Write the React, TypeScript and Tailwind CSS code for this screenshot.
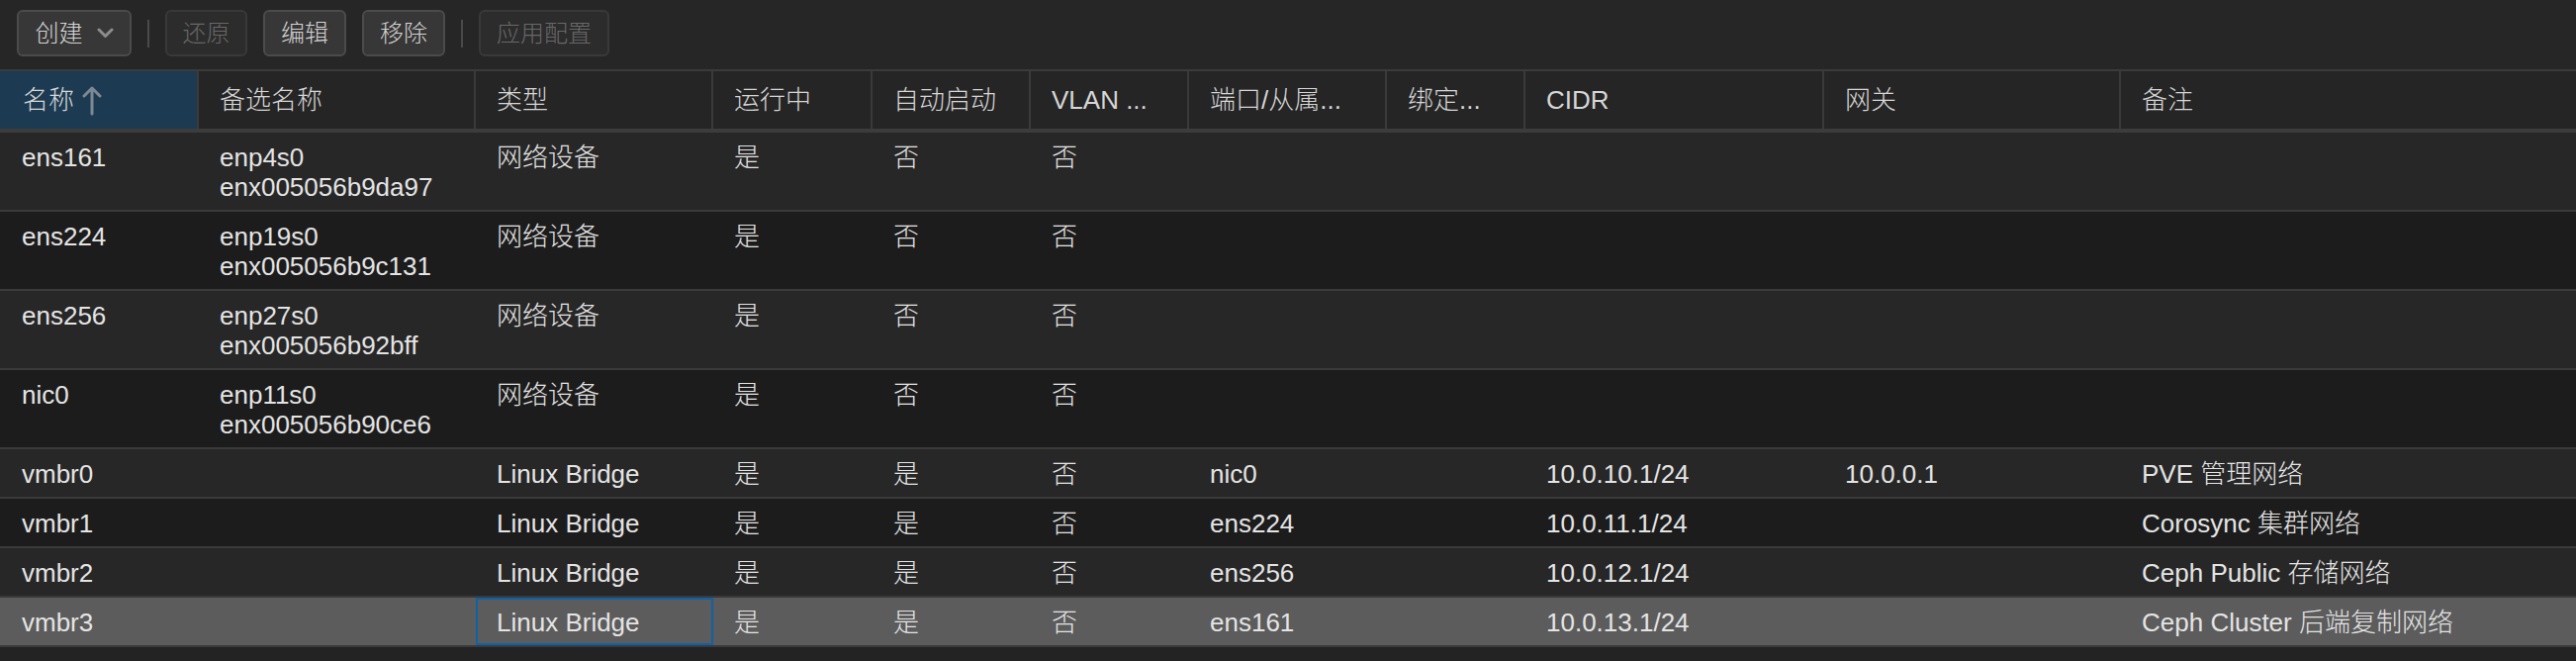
const font = { fontFamily: '"Liberation Sans", "Noto Sans CJK SC", sans-serif' };

type Col = { label: string; w: string };

const cols: Col[] = [
  { label: "名称", w: "w-[201px]" },
  { label: "备选名称", w: "w-[280px]" },
  { label: "类型", w: "w-[240px]" },
  { label: "运行中", w: "w-[161px]" },
  { label: "自动启动", w: "w-[160px]" },
  { label: "VLAN ...", w: "w-[160px]" },
  { label: "端口/从属...", w: "w-[200px]" },
  { label: "绑定...", w: "w-[140px]" },
  { label: "CIDR", w: "w-[302px]" },
  { label: "网关", w: "w-[300px]" },
  { label: "备注", w: "flex-1" },
];

type Row = { cells: (string | string[])[]; selected?: boolean };

const rows: Row[] = [
  { cells: ["ens161", ["enp4s0", "enx005056b9da97"], "网络设备", "是", "否", "否", "", "", "", "", ""] },
  { cells: ["ens224", ["enp19s0", "enx005056b9c131"], "网络设备", "是", "否", "否", "", "", "", "", ""] },
  { cells: ["ens256", ["enp27s0", "enx005056b92bff"], "网络设备", "是", "否", "否", "", "", "", "", ""] },
  { cells: ["nic0", ["enp11s0", "enx005056b90ce6"], "网络设备", "是", "否", "否", "", "", "", "", ""] },
  { cells: ["vmbr0", "", "Linux Bridge", "是", "是", "否", "nic0", "", "10.0.10.1/24", "10.0.0.1", "PVE 管理网络"] },
  { cells: ["vmbr1", "", "Linux Bridge", "是", "是", "否", "ens224", "", "10.0.11.1/24", "", "Corosync 集群网络"] },
  { cells: ["vmbr2", "", "Linux Bridge", "是", "是", "否", "ens256", "", "10.0.12.1/24", "", "Ceph Public 存储网络"] },
  { cells: ["vmbr3", "", "Linux Bridge", "是", "是", "否", "ens161", "", "10.0.13.1/24", "", "Ceph Cluster 后端复制网络"], selected: true },
];

function ToolButton({ label, w, disabled, menu }: { label: string; w: string; disabled?: boolean; menu?: boolean }) {
  return (
    <button
      type="button"
      className={`flex h-[47px] ${w} items-center justify-center gap-[14px] rounded-[6px] border-2 text-[24px] ${
        disabled
          ? "border-[#393939] bg-[#2c2c2c] text-[#686868]"
          : "border-[#4b4b4b] bg-[#373737] text-[#d4d4d4]"
      }`}
    >
      {label}
      {menu ? (
        <svg width="17" height="11" viewBox="0 0 17 11" fill="none">
          <path d="M2 2l6.5 6.5L15 2" stroke="#8c8c8c" strokeWidth="3" strokeLinecap="round" strokeLinejoin="round" />
        </svg>
      ) : null}
    </button>
  );
}

function Sep() {
  return <div className="mt-[10px] h-[28px] w-[2px] bg-[#4a4a4a]" />;
}

export default function App() {
  return (
    <div className="h-[668px] w-full overflow-hidden bg-[#232323] font-light text-[#e4e4e4]" style={font}>
      <div className="flex h-[72px] items-start gap-[16px] border-b-2 border-[#3b3b3b] bg-[#262626] pl-[17px] pt-[10px]">
        <ToolButton label="创建" w="w-[116px]" menu />
        <Sep />
        <ToolButton label="还原" w="w-[83px]" disabled />
        <ToolButton label="编辑" w="w-[84px]" />
        <ToolButton label="移除" w="w-[84px]" />
        <Sep />
        <ToolButton label="应用配置" w="w-[132px]" disabled />
      </div>

      <div className="flex h-[62px] border-b-4 border-[#3c3c3c] bg-[#252525] text-[26px] text-[#d6d6d6]">
        {cols.map((c, i) => (
          <div
            key={c.label}
            className={`flex ${c.w} items-center gap-[8px] whitespace-nowrap ${
              i === cols.length - 1 ? "" : "border-r-2 border-[#3a3a3a]"
            } ${i === 0 ? "bg-[#1c3a52] pl-[23px]" : "pl-[21px]"}`}
          >
            {c.label}
            {i === 0 ? (
              <svg width="20" height="31" viewBox="0 0 20 31" fill="none">
                <path d="M10 29V3M2 11l8-8 8 8" stroke="#7d8893" strokeWidth="3" strokeLinecap="round" strokeLinejoin="round" />
              </svg>
            ) : null}
          </div>
        ))}
      </div>

      {rows.map((r, ri) => (
        <div
          key={ri}
          className={`flex border-b-2 border-[#3a3a3a] text-[26px] leading-[30px] ${
            r.selected ? "bg-[#5c5c5c]" : ri % 2 === 0 ? "bg-[#272727]" : "bg-[#1c1c1c]"
          }`}
        >
          {r.cells.map((cell, ci) => {
            const sel = r.selected && ci === 2;
            return (
              <div
                key={ci}
                className={`${cols[ci].w} whitespace-nowrap ${
                  sel
                    ? "border-2 border-[#0f62a8] pb-[6px] pl-[19px] pt-[8px]"
                    : `border-r-2 border-transparent pb-[8px] pt-[10px] ${ci === 0 ? "pl-[22px]" : "pl-[21px]"}`
                }`}
              >
                {Array.isArray(cell) ? cell.map((l) => <div key={l}>{l}</div>) : cell}
              </div>
            );
          })}
        </div>
      ))}
    </div>
  );
}
